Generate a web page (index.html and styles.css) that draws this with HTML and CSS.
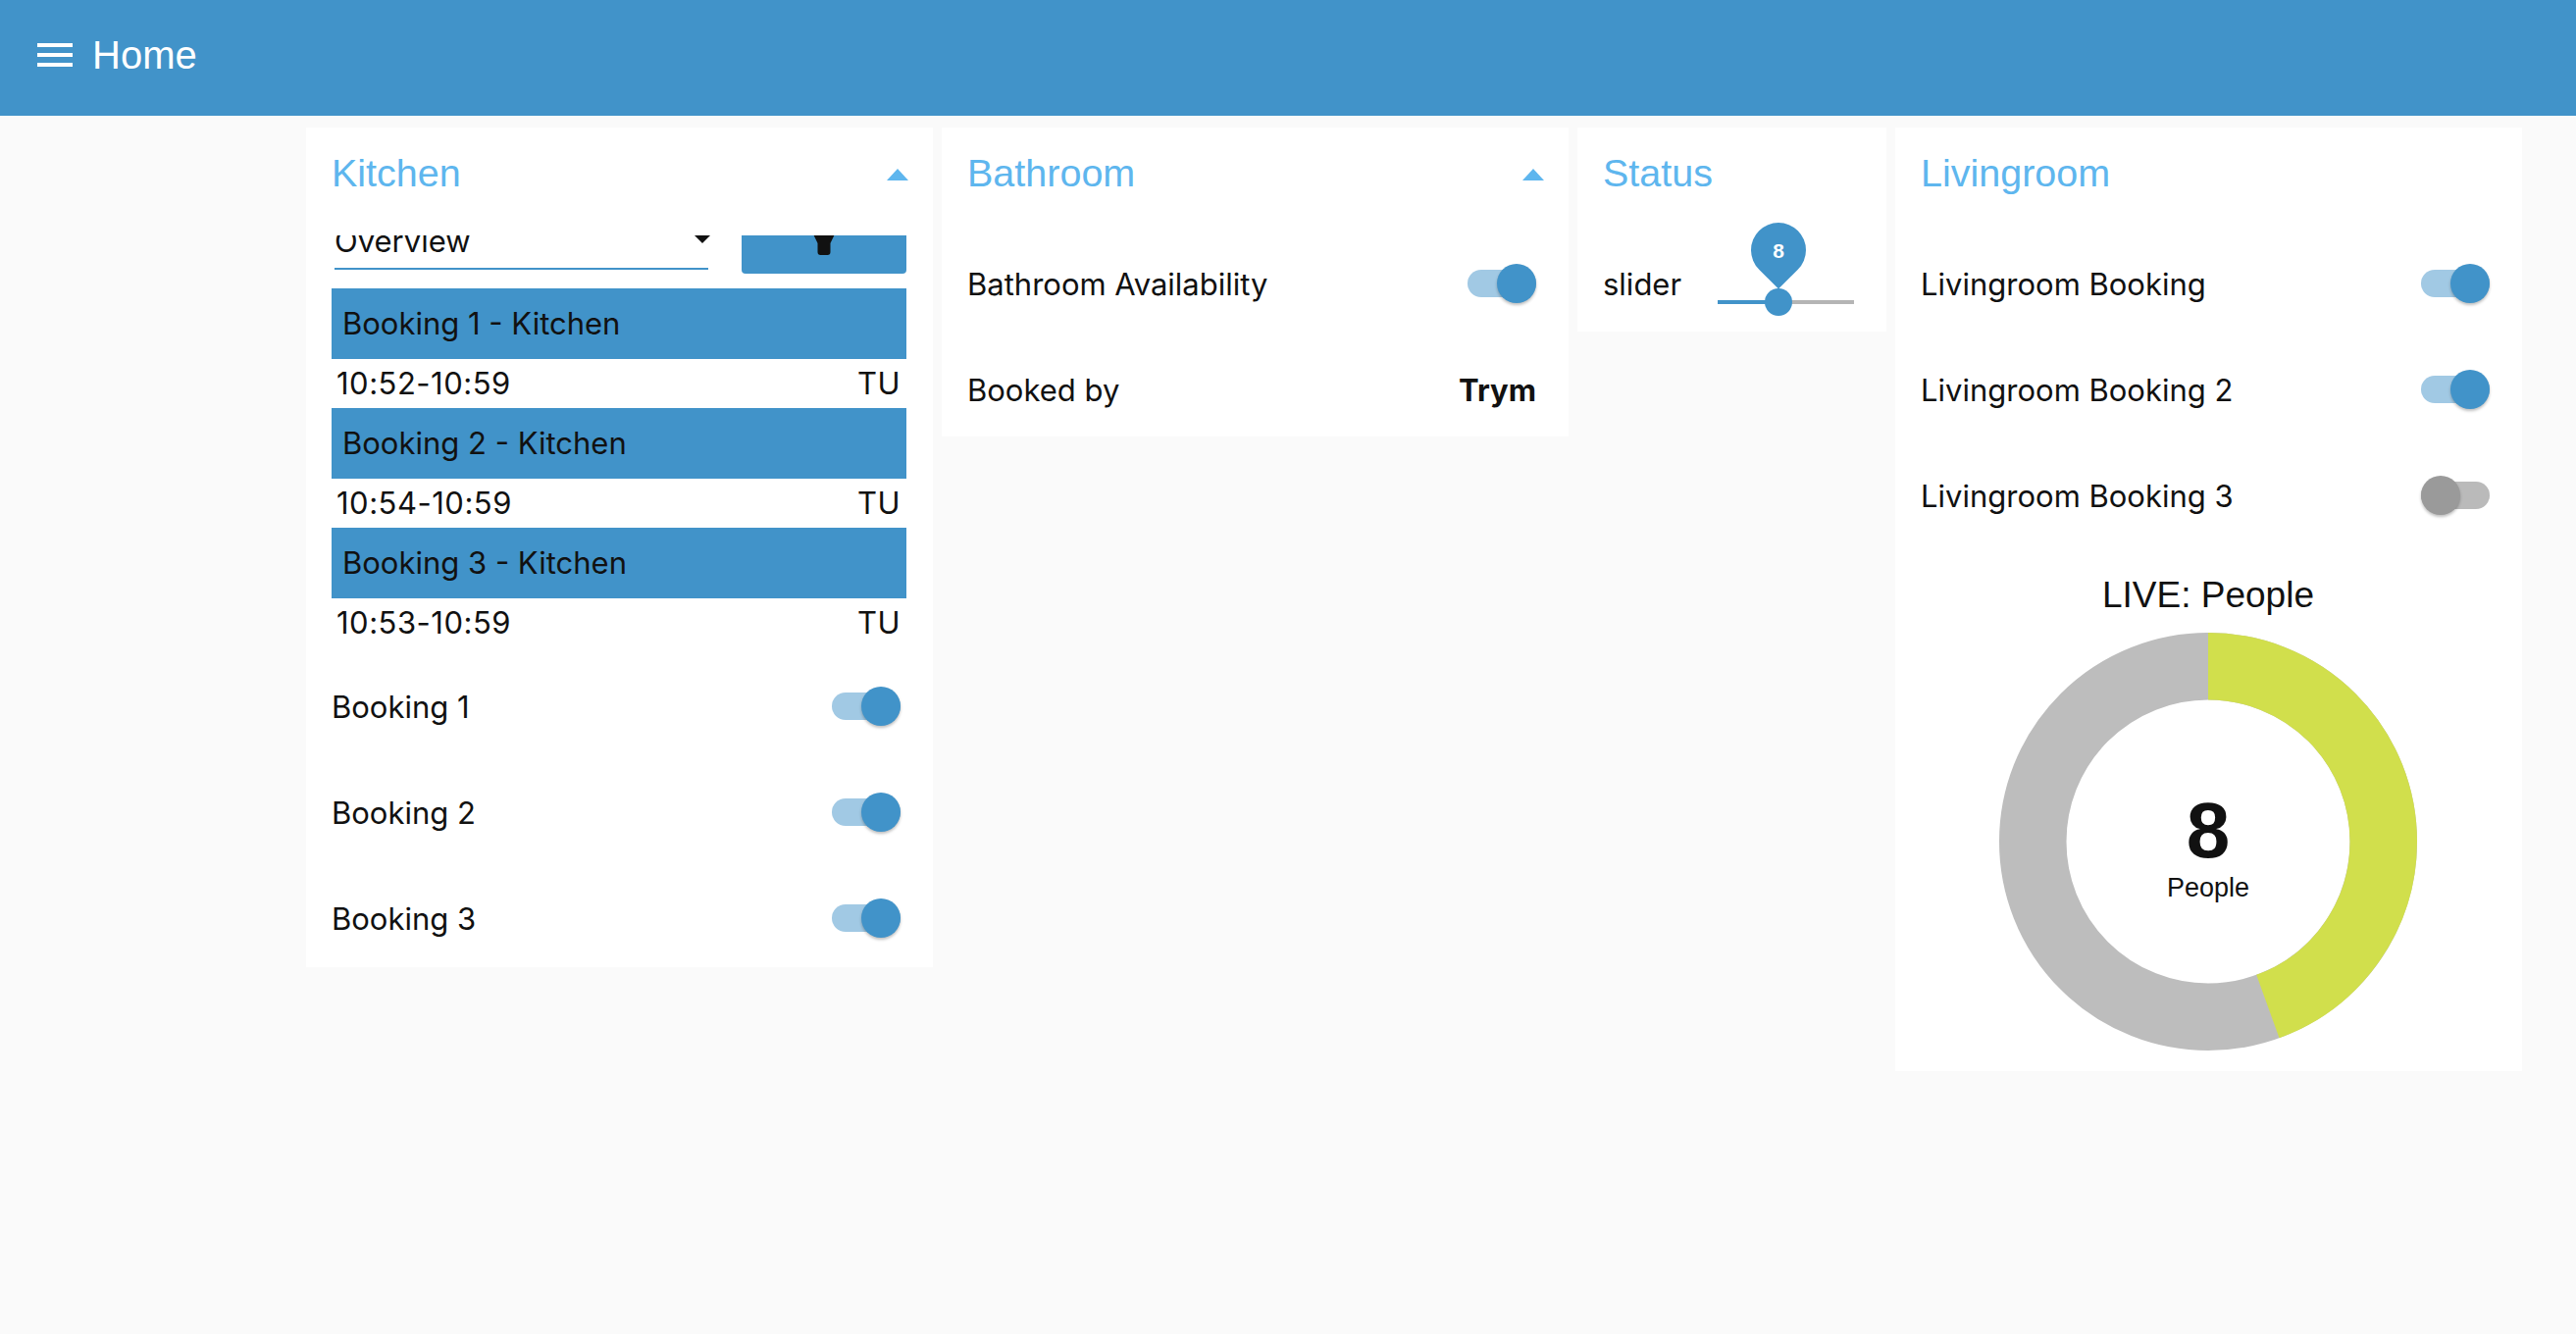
FILE: index.html
```html
<!DOCTYPE html>
<html lang="en">
<head>
<meta charset="utf-8">
<title>Home</title>
<link rel="stylesheet" href="styles.css">
</head>
<body>
<header class="topbar">
  <svg class="menu-icon" width="36" height="24" viewBox="0 0 36 24" aria-hidden="true">
    <rect x="0" y="0" width="36" height="4"/>
    <rect x="0" y="10" width="36" height="4"/>
    <rect x="0" y="20" width="36" height="4"/>
  </svg>
  <h1 class="page-title">Home</h1>
</header>

<main class="dashboard">
  <section class="card card-kitchen">
    <div class="card-header tight">
      <h2 class="card-title">Kitchen</h2>
      <span class="caret"></span>
    </div>
    <div class="card-body clip">
      <div class="filter-row">
        <div class="select">Overview<span class="select-arrow"></span></div>
        <button class="filter-btn" type="button" aria-label="Filter">
          <svg width="40" height="40" viewBox="0 0 40 40" aria-hidden="true">
            <path d="M0 0H40L26.5 28V37Q26.5 40 23.5 40H16.5Q13.5 40 13.5 37V28Z"/>
          </svg>
        </button>
      </div>
      <ul class="booking-list">
        <li class="booking-name">Booking 1 - Kitchen</li>
        <li class="booking-time"><span>10:52-10:59</span><span>TU</span></li>
        <li class="booking-name">Booking 2 - Kitchen</li>
        <li class="booking-time"><span>10:54-10:59</span><span>TU</span></li>
        <li class="booking-name">Booking 3 - Kitchen</li>
        <li class="booking-time"><span>10:53-10:59</span><span>TU</span></li>
      </ul>
      <div class="rows after-list">
        <div class="row"><span>Booking 1</span><span class="toggle on"><span class="track"></span><span class="thumb"></span></span></div>
        <div class="row"><span>Booking 2</span><span class="toggle on"><span class="track"></span><span class="thumb"></span></span></div>
        <div class="row"><span>Booking 3</span><span class="toggle on"><span class="track"></span><span class="thumb"></span></span></div>
      </div>
    </div>
  </section>

  <section class="card card-bathroom">
    <div class="card-header">
      <h2 class="card-title">Bathroom</h2>
      <span class="caret"></span>
    </div>
    <div class="rows">
      <div class="row"><span>Bathroom Availability</span><span class="toggle on"><span class="track"></span><span class="thumb"></span></span></div>
      <div class="row"><span>Booked by</span><span class="value-bold">Trym</span></div>
    </div>
  </section>

  <section class="card card-status">
    <div class="card-header">
      <h2 class="card-title">Status</h2>
    </div>
    <div class="rows">
      <div class="row">
        <span>slider</span>
        <div class="slider">
          <span class="slider-fill"></span>
          <span class="slider-rest"></span>
          <span class="slider-knob"></span>
          <span class="slider-pin"><span class="pin-text">8</span></span>
        </div>
      </div>
    </div>
  </section>

  <section class="card card-living">
    <div class="card-header">
      <h2 class="card-title">Livingroom</h2>
    </div>
    <div class="rows">
      <div class="row"><span>Livingroom Booking</span><span class="toggle on"><span class="track"></span><span class="thumb"></span></span></div>
      <div class="row"><span>Livingroom Booking 2</span><span class="toggle on"><span class="track"></span><span class="thumb"></span></span></div>
      <div class="row"><span>Livingroom Booking 3</span><span class="toggle off"><span class="track"></span><span class="thumb"></span></span></div>
    </div>
    <div class="chart">
      <h3 class="chart-title">LIVE: People</h3>
      <div class="donut">
        <svg width="426" height="426" viewBox="0 0 426 426" aria-hidden="true">
          <circle cx="213" cy="213" r="178.75" fill="none" stroke="#bdbdbd" stroke-width="68.5"/>
          <circle cx="213" cy="213" r="178.75" fill="none" stroke="#d1df4c" stroke-width="68.5" stroke-dasharray="499.2 1200" transform="rotate(-90 213 213)"/>
        </svg>
        <div class="donut-label">
          <span class="donut-value">8</span>
          <span class="donut-unit">People</span>
        </div>
      </div>
    </div>
  </section>
</main>
</body>
</html>
```

FILE: styles.css
```css
* { box-sizing: border-box; }

body {
  margin: 0;
  background: #fafafa;
  font-family: Inter, "Liberation Sans", sans-serif;
  color: #111;
}

.topbar {
  height: 118px;
  background: #4193c9;
  display: flex;
  align-items: center;
  padding: 0 0 6px 38px;
}
.menu-icon { display: block; fill: #fff; }
.page-title {
  margin: 0 0 0 20px;
  font: 400 40px/40px "Liberation Sans", Arial, sans-serif;
  color: #fff;
}

.dashboard {
  display: flex;
  align-items: flex-start;
  gap: 9px;
  padding: 12px 0 0 312px;
}

.card {
  background: #fff;
  padding: 0 27px 0 26px;
  flex: none;
}
.card-kitchen { width: 639px; padding-bottom: 2px; }
.card-bathroom { width: 639px; }
.card-status { width: 315px; padding-bottom: 1px; }
.card-living { width: 639px; padding-bottom: 21px; }

.card-header {
  height: 111px;
  display: flex;
  justify-content: space-between;
  align-items: flex-start;
  padding-top: 22px;
}
.card-header.tight { height: 110px; }
.card-title {
  margin: 0;
  font: 400 39.5px/48px "Liberation Sans", Arial, sans-serif;
  color: #5eb6ee;
}
.caret {
  width: 0;
  height: 0;
  border-left: 11px solid transparent;
  border-right: 11px solid transparent;
  border-bottom: 12px solid #5eb6ee;
  margin: 20px -2px 0 0;
}

.clip { overflow: hidden; }

.filter-row {
  display: flex;
  align-items: flex-start;
  height: 70px;
  margin-top: -30px;
}
.select {
  position: relative;
  width: 381px;
  height: 65px;
  margin-left: 3px;
  padding: 18px 0 9px 0;
  font-size: 31px;
  line-height: 36px;
  border-bottom: 2px solid #4193c9;
}
.select-arrow {
  position: absolute;
  right: -2px;
  top: 30px;
  width: 0;
  height: 0;
  border-left: 8px solid transparent;
  border-right: 8px solid transparent;
  border-top: 8px solid #111;
}
.filter-btn {
  margin-left: auto;
  width: 168px;
  height: 69px;
  background: #4193c9;
  border: 0;
  border-radius: 4px;
  padding: 10px 0 0;
  display: flex;
  justify-content: center;
  align-items: flex-start;
}
.filter-btn svg { display: block; fill: #111; }

.booking-list {
  list-style: none;
  margin: 14px 0 0;
  padding: 0;
  font-size: 31px;
}
.booking-name {
  height: 72px;
  line-height: 72px;
  background: #4193c9;
  padding-left: 11px;
}
.booking-time {
  height: 50px;
  line-height: 50px;
  display: flex;
  justify-content: space-between;
  padding: 0 6px 0 5px;
  letter-spacing: 0.5px;
}

.rows {
  display: flex;
  flex-direction: column;
  gap: 12px;
}
.rows.after-list { margin-top: 12px; }
.row {
  height: 96px;
  display: flex;
  align-items: center;
  justify-content: space-between;
  padding-right: 6px;
  font-size: 31px;
}
.value-bold { font-weight: 700; }

.toggle {
  position: relative;
  width: 70px;
  height: 40px;
  flex: none;
}
.track {
  position: absolute;
  left: 0;
  top: 6px;
  width: 70px;
  height: 28px;
  border-radius: 14px;
  background: #a1c9e4;
}
.thumb {
  position: absolute;
  top: 0;
  right: 0;
  width: 40px;
  height: 40px;
  border-radius: 50%;
  background: #4193c9;
  box-shadow: 0 2px 3px rgba(0, 0, 0, 0.25);
}
.toggle.off .track { background: #bababa; }
.toggle.off .thumb { left: 0; right: auto; background: #9a9a9a; }

.slider {
  position: relative;
  width: 139px;
  height: 96px;
  flex: none;
}
.slider-fill {
  position: absolute;
  left: 0;
  top: 65px;
  width: 62px;
  height: 4px;
  background: #4193c9;
}
.slider-rest {
  position: absolute;
  left: 62px;
  right: 0;
  top: 65px;
  height: 4px;
  background: #b5b5b5;
}
.slider-knob {
  position: absolute;
  left: 48px;
  top: 53px;
  width: 28px;
  height: 28px;
  border-radius: 50%;
  background: #4193c9;
}
.slider-pin {
  position: absolute;
  left: 34px;
  top: -14px;
  width: 56px;
  height: 56px;
  display: flex;
  align-items: center;
  justify-content: center;
}
.slider-pin::before {
  content: "";
  position: absolute;
  inset: 0;
  background: #4193c9;
  border-radius: 50% 50% 0 50%;
  transform: rotate(45deg);
}
.pin-text {
  position: relative;
  color: #fff;
  font: 700 21px/21px "Liberation Sans", Arial, sans-serif;
}

.chart {
  display: flex;
  flex-direction: column;
  align-items: center;
  margin-top: 32px;
}
.chart-title {
  margin: 0;
  font: 400 37px/44px "Liberation Sans", Arial, sans-serif;
  color: #111;
}
.donut {
  position: relative;
  width: 426px;
  height: 426px;
  margin-top: 16px;
}
.donut svg { display: block; }
.donut-label {
  position: absolute;
  left: 0;
  right: 0;
  top: 162px;
  text-align: center;
  font-family: "Liberation Sans", Arial, sans-serif;
}
.donut-value { display: block; font-weight: 700; font-size: 80px; line-height: 80px; }
.donut-unit { display: block; font-size: 27px; line-height: 32px; margin-top: 2px; }
```
